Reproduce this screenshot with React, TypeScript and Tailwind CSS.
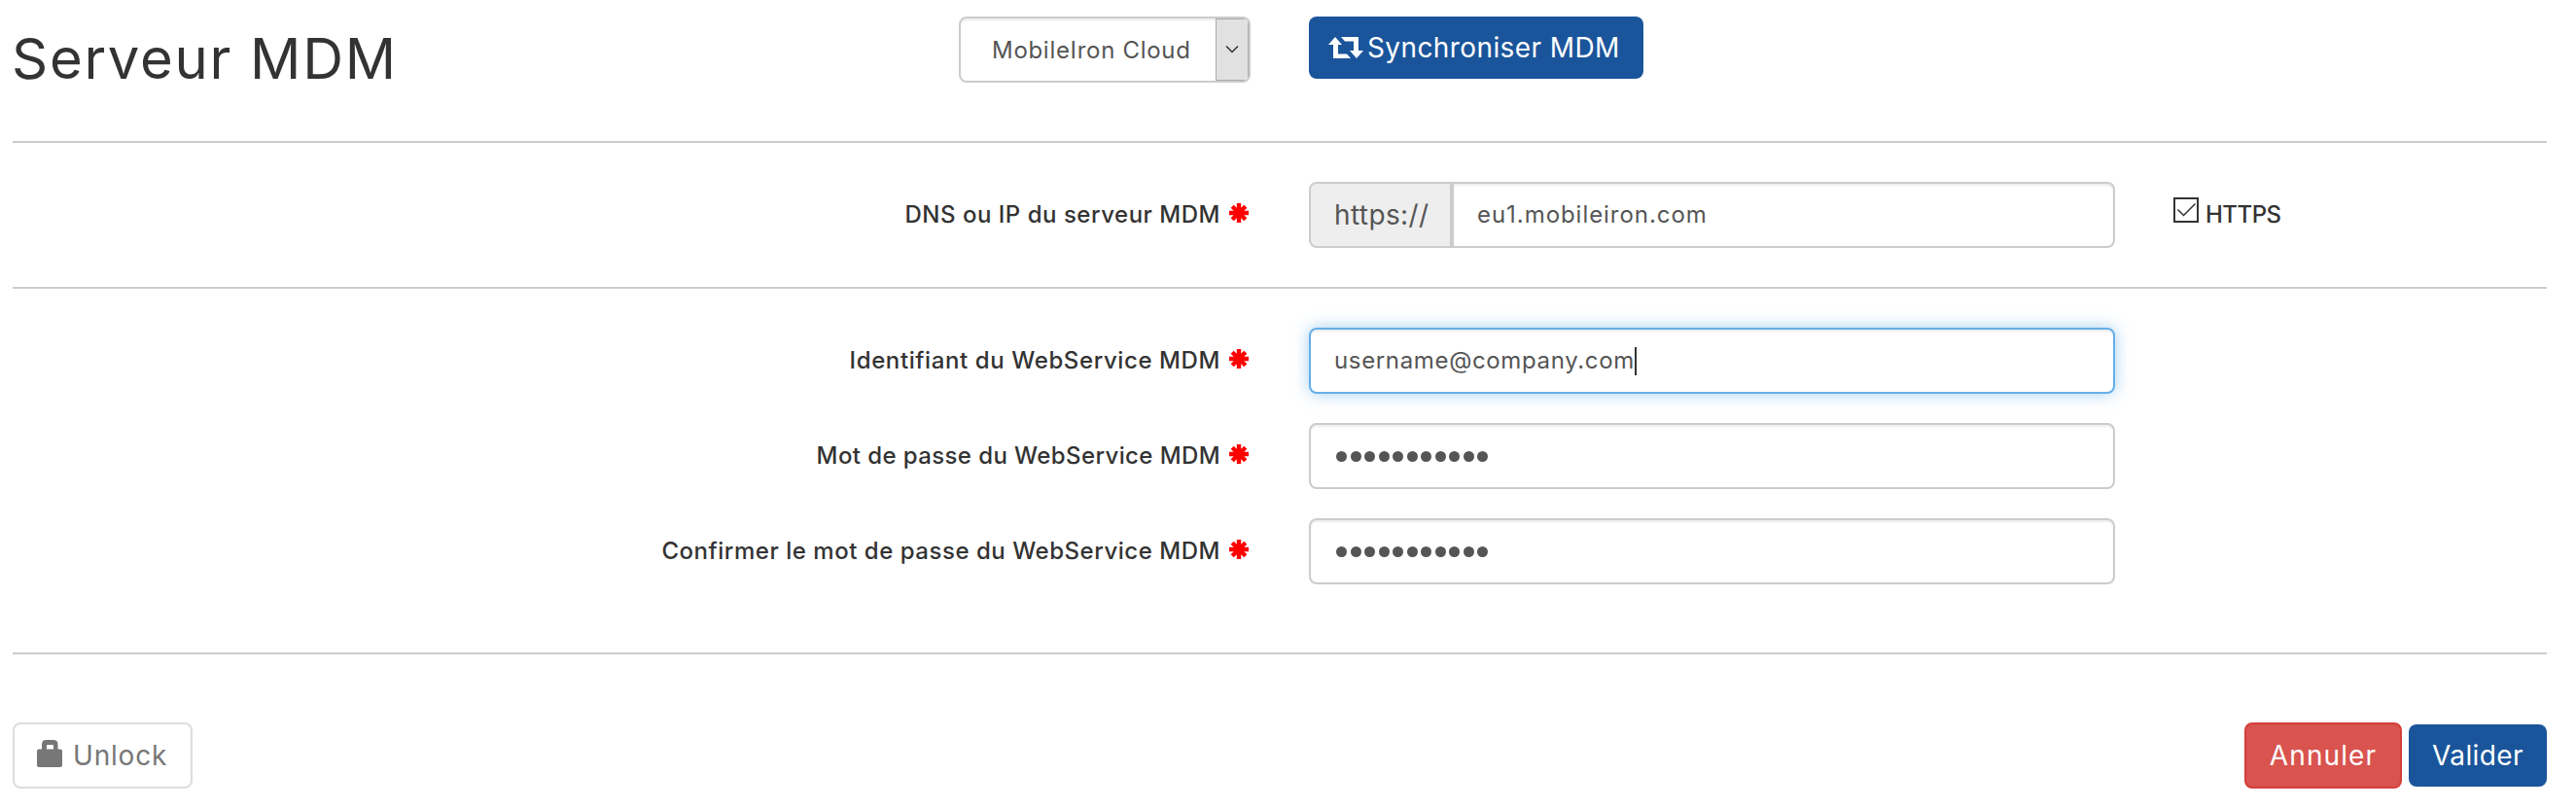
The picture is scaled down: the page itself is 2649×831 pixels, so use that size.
import { ReactNode } from 'react';
import clsx from 'clsx';

const inputBase = 'flex h-[68px] items-center border-2 bg-white px-6 text-[24px] text-[#555]';
const inputShadow = 'shadow-[inset_0_2px_2px_rgba(0,0,0,0.075)]';

function Asterisk() {
    return (
        <svg viewBox="0 0 20 20" className="mt-[-4px] ml-[9px] size-5 shrink-0" stroke="#f00" strokeWidth="4.400">
            <path d="M10 0v20M0 10h20M3.2 3.2l13.6 13.6M16.8 3.2L3.2 16.8" />
        </svg>
    );
}

function RetweetIcon() {
    return (
        <svg viewBox="0 0 36 22" className="h-[22px] w-9 shrink-0" fill="#fff">
            <path d="M7 0l7 8h-4v9.500h9l4 4.500H5V8H0z" />
            <path d="M29 22l-7-8h4V4.500H17L13 0h18v14h5z" />
        </svg>
    );
}

function LockIcon() {
    return (
        <svg viewBox="0 0 26 28" className="mt-[-5px] h-7 w-[26px] shrink-0" fill="#777">
            <path fillRule="evenodd" d="M5 9.500V4.500Q5 0 9.500 0h7.500Q21.500 0 21.500 4.500v5H24q2 0 2 2V26q0 2-2 2H2q-2 0-2-2V11.500q0-2 2-2zM10 9.500h7V5.500Q17 5 16.500 5h-6Q10 5 10 5.500z" />
        </svg>
    );
}

function Row({ label, children }: { label: ReactNode; children: ReactNode }) {
    return (
        <div className="flex h-[68px] items-center">
            <div className="flex w-[1271px] items-center justify-end whitespace-nowrap text-[24px] font-medium">
                {label}
                <Asterisk />
            </div>
            <div className="ml-[62px] w-[829px]">{children}</div>
        </div>
    );
}

function Password() {
    return (
        <div className={clsx(inputBase, inputShadow, 'rounded-lg border-[#ccc]')}>
            <span className="flex gap-[3.5px] pl-[2px]">
                {Array.from({ length: 11 }, (_, i) => (
                    <span key={i} className="size-[11px] rounded-full bg-[#555]" />
                ))}
            </span>
        </div>
    );
}

export default function App() {
    return (
        <div className="h-[831px] overflow-hidden bg-white pr-[30px] pl-[13px] font-['Inter',sans-serif] text-[#333]">
            {/* en-tête */}
            <header className="flex h-[145px] items-start pt-[17px]">
                <h1 className="mt-[8px] -ml-[1px] w-[974px] text-[58px] leading-[70px] font-normal tracking-[1.7px]">Serveur MDM</h1>
                <div className={clsx('flex h-[68px] w-[300px] items-stretch overflow-hidden rounded-lg border-2 border-[#ccc] text-[24px] text-[#555]', inputShadow)}>
                    <span className="flex flex-1 items-center pt-[2px] pl-[32px] tracking-[0.7px] whitespace-nowrap">MobileIron Cloud</span>
                    <span className="flex w-[34px] items-center justify-center border border-[#aaa] bg-[#e1e1e1]">
                        <svg viewBox="0 0 14 8" className="h-2 w-[14px]" fill="none" stroke="#333" strokeWidth="1.500">
                            <path d="M1 .5l6 6 6-6" />
                        </svg>
                    </span>
                </div>
                <button className="ml-[60px] flex h-16 w-[344px] items-center rounded-lg bg-[#1a559b] pl-5 text-[28px] tracking-[0.4px] whitespace-nowrap text-white">
                    <RetweetIcon />
                    <span className="ml-1">Synchroniser MDM</span>
                </button>
            </header>
            <hr className="border-t-2 border-[#ccc]" />

            {/* serveur */}
            <div className="relative my-10">
                <Row label={<span className="tracking-[0.52px]">DNS ou IP du serveur MDM</span>}>
                    <div className="flex">
                        <span className="flex h-[68px] w-[147px] items-center rounded-l-lg border-2 border-[#ccc] bg-[#eee] pl-6 text-[28px] tracking-[0.4px] text-[#555]">https://</span>
                        <div className={clsx(inputBase, inputShadow, 'flex-1 rounded-r-lg border-[#ccc] tracking-[0.95px]')}>eu1.mobileiron.com</div>
                    </div>
                </Row>
                <div className="absolute top-4 left-[2222px] flex items-start text-[24px] font-medium">
                    <svg viewBox="0 0 26 26" className="size-[26px]" fill="none" stroke="#333">
                        <path d="M1 1h24v24H1z" strokeWidth="2" />
                        <path d="M4.500 12.500l6 6L22.500 6.500" strokeWidth="1.500" />
                    </svg>
                    <span className="ml-[7px] leading-[36px] tracking-[-0.5px]">HTTPS</span>
                </div>
            </div>
            <hr className="border-t-2 border-[#ccc]" />

            {/* compte WebService */}
            <div className="flex flex-col gap-[30px] pt-10 pb-[70px]">
                <Row label={<span className="tracking-[0.6px]">Identifiant du WebService MDM</span>}>
                    <div className={clsx(inputBase, 'rounded-lg border-[#66afe9] tracking-[0.65px] shadow-[inset_0_2px_2px_rgba(0,0,0,0.075),0_0_16px_rgba(102,175,233,0.6)]')}>
                        username@company.com
                        <span className="h-[29px] w-[2px] bg-[#333]" />
                    </div>
                </Row>
                <Row label={<span className="tracking-[0.4px]">Mot de passe du WebService MDM</span>}>
                    <Password />
                </Row>
                <Row label={<span className="tracking-[0.53px]">Confirmer le mot de passe du WebService MDM</span>}>
                    <Password />
                </Row>
            </div>
            <hr className="border-t-2 border-[#ccc]" />

            {/* actions */}
            <footer className="mt-[70px] flex h-[68px] items-center text-[28px]">
                <button className="flex h-[68px] w-[185px] items-center rounded-lg border-2 border-[#ddd] pl-[23px] tracking-[0.8px] text-[#777]">
                    <LockIcon />
                    <span className="ml-[11px]">Unlock</span>
                </button>
                <button className="ml-auto h-[68px] w-[162px] rounded-lg border-2 border-[#d43f3a] bg-[#d9534f] tracking-[1.1px] text-white">Annuler</button>
                <button className="ml-[7px] h-16 w-[142px] rounded-lg bg-[#1a559b] tracking-[0.4px] text-white">Valider</button>
            </footer>
        </div>
    );
}
